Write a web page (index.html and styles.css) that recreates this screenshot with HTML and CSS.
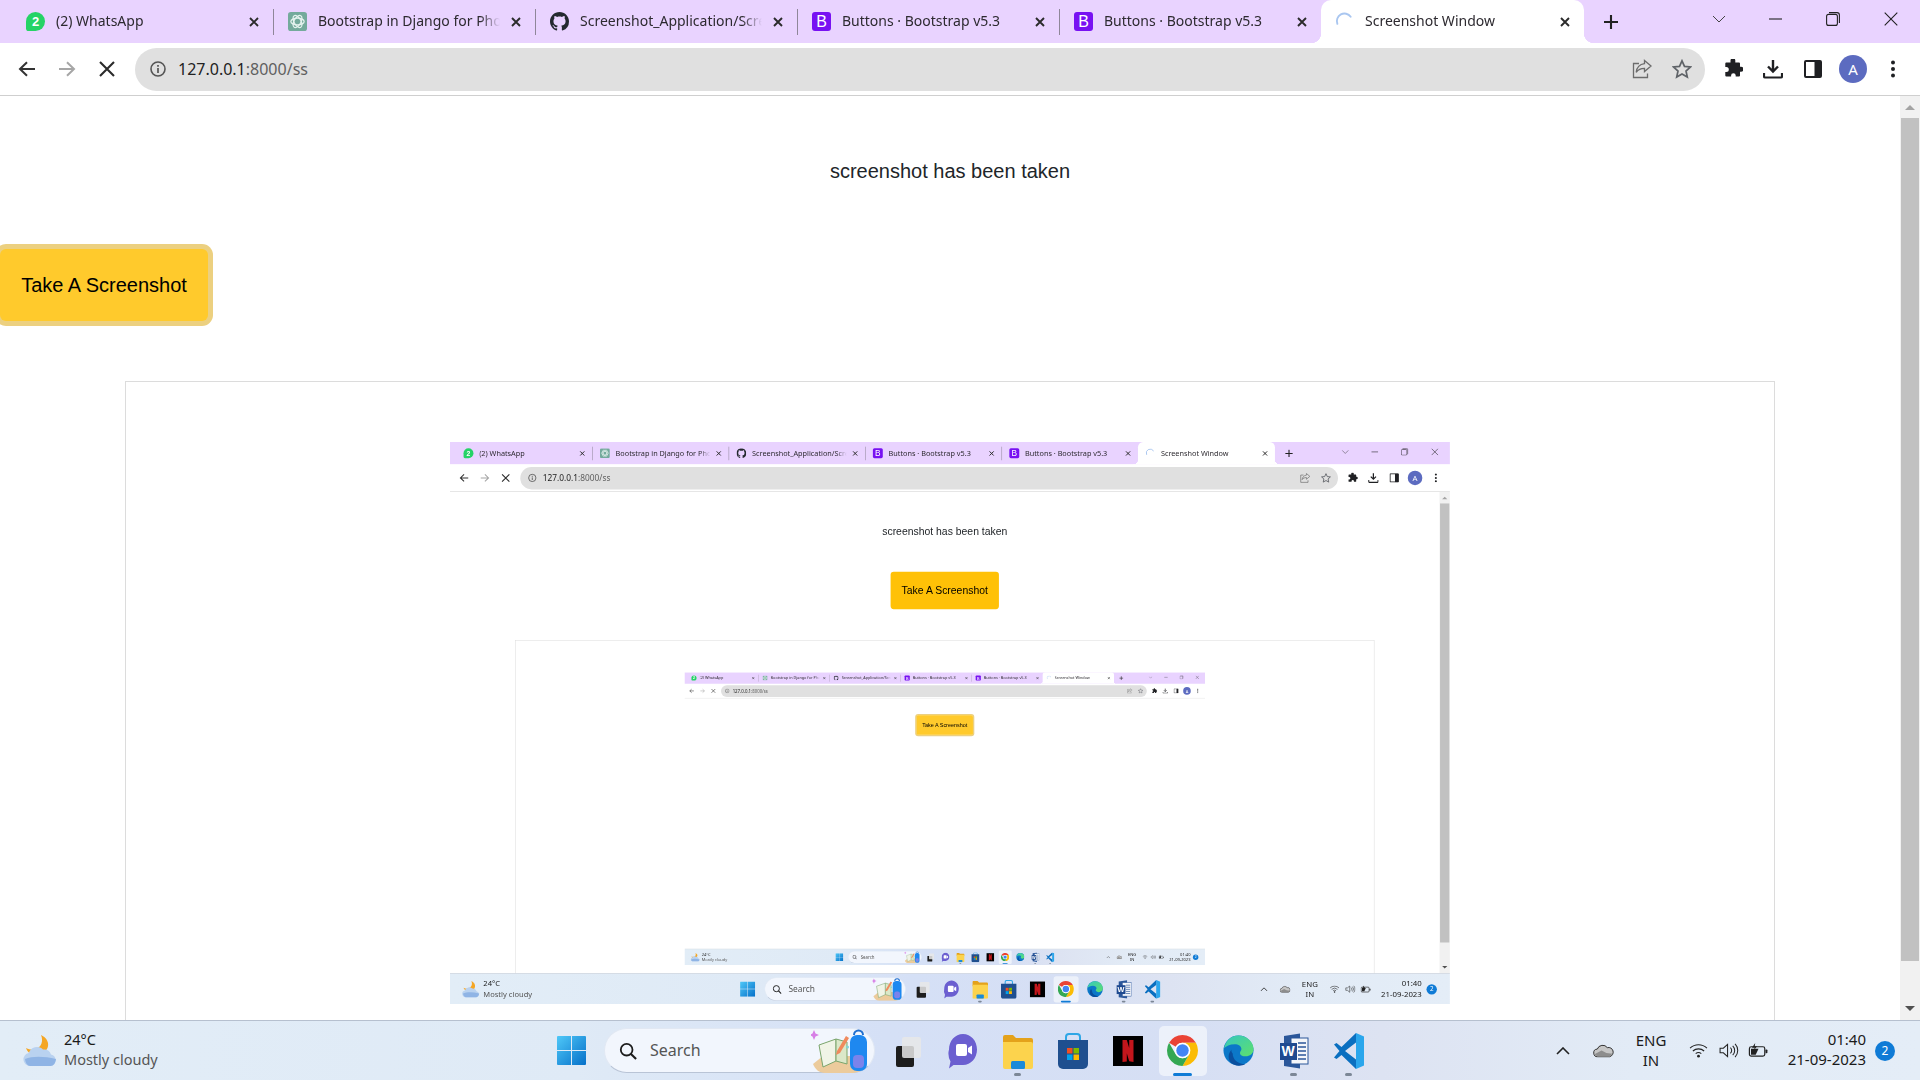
FILE: index.html
```html
<!DOCTYPE html>
<html lang="en">
<head>
<meta charset="utf-8">
<title>Screenshot Window</title>
<link rel="stylesheet" href="styles.css">
</head>
<body>
<svg class="sprite" xmlns="http://www.w3.org/2000/svg">
  <symbol id="i-gpt" viewBox="0 0 20 20"><rect width="20" height="20" rx="3" fill="#74aa9c"/><g fill="none" stroke="#e6f3ef" stroke-width="1.3"><ellipse cx="10" cy="10" rx="7" ry="3.6"/><ellipse cx="10" cy="10" rx="7" ry="3.6" transform="rotate(60 10 10)"/><ellipse cx="10" cy="10" rx="7" ry="3.6" transform="rotate(120 10 10)"/></g></symbol>
  <symbol id="i-gh" viewBox="0 0 16 16"><path fill="#24292f" d="M8 0C3.58 0 0 3.58 0 8c0 3.54 2.29 6.53 5.47 7.59.4.07.55-.17.55-.38 0-.19-.01-.82-.01-1.49-2.01.37-2.53-.49-2.69-.94-.09-.23-.48-.94-.82-1.13-.28-.15-.68-.52-.01-.53.63-.01 1.08.58 1.23.82.72 1.21 1.87.87 2.33.66.07-.52.28-.87.51-1.07-1.78-.2-3.64-.89-3.64-3.95 0-.87.31-1.59.82-2.15-.08-.2-.36-1.02.08-2.12 0 0 .67-.21 2.2.82.64-.18 1.32-.27 2-.27.68 0 1.36.09 2 .27 1.53-1.04 2.2-.82 2.2-.82.44 1.1.16 1.92.08 2.12.51.56.82 1.27.82 2.15 0 3.07-1.87 3.75-3.65 3.95.29.25.54.73.54 1.48 0 1.07-.01 1.93-.01 2.2 0 .21.15.46.55.38A8.013 8.013 0 0 0 16 8c0-4.42-3.58-8-8-8z"/></symbol>
  <symbol id="i-spin" viewBox="0 0 20 20"><path d="M2.5 12.5A8 8 0 0 1 16.5 5" fill="none" stroke="#a9c6f0" stroke-width="2" stroke-linecap="round"/></symbol>
  <symbol id="i-x" viewBox="0 0 12 12"><path d="M2 2l8 8M10 2l-8 8" stroke="#2b2b2b" stroke-width="1.9" fill="none"/></symbol>
  <symbol id="i-plus" viewBox="0 0 16 16"><path d="M8 1v14M1 8h14" stroke="#222" stroke-width="2.1" fill="none"/></symbol>
  <symbol id="i-chev" viewBox="0 0 14 8"><path d="M1 1l6 6 6-6" stroke="#444" stroke-width="1" fill="none"/></symbol>
  <symbol id="i-min" viewBox="0 0 14 14"><path d="M0 7h13" stroke="#222" stroke-width="1.1"/></symbol>
  <symbol id="i-max" viewBox="0 0 14 14"><rect x=".6" y="2.4" width="10.8" height="11" rx="2" fill="none" stroke="#222" stroke-width="1.1"/><path d="M3 .6h8a2.4 2.4 0 0 1 2.4 2.4v8" fill="none" stroke="#222" stroke-width="1.1"/></symbol>
  <symbol id="i-close" viewBox="0 0 14 14"><path d="M.7.7l12.6 12.6M13.300.7L.7 13.300" stroke="#222" stroke-width="1.1" fill="none"/></symbol>
  <symbol id="i-back" viewBox="0 0 20 20"><path d="M18 10H3M10 3.200L3 10l7 6.800" stroke="#333" stroke-width="2" fill="none"/></symbol>
  <symbol id="i-fwd" viewBox="0 0 20 20"><path d="M2 10h15M10 3.200l7 6.800-7 6.800" stroke="#a6a6a6" stroke-width="2" fill="none"/></symbol>
  <symbol id="i-stop" viewBox="0 0 20 20"><path d="M3 3l14 14M17 3L3 17" stroke="#2b2b2b" stroke-width="2.1" fill="none"/></symbol>
  <symbol id="i-info" viewBox="0 0 18 18"><circle cx="9" cy="9" r="7" fill="none" stroke="#555" stroke-width="1.6"/><path d="M9 8v5M9 5v1.800" stroke="#555" stroke-width="1.7"/></symbol>
  <symbol id="i-share" viewBox="0 0 20 20"><path d="M12.500 1.500l6.500 5.500-6.500 5.500V9.300c-4 0-6.500 1.300-8.300 4 .5-4.700 3.300-8 8.300-8.700z" fill="none" stroke="#6c6c6c" stroke-width="1.300"/><path d="M7 4.500H1.500v14h14v-4" fill="none" stroke="#6c6c6c" stroke-width="1.300"/></symbol>
  <symbol id="i-star" viewBox="0 0 20 20"><path d="M10 1.800l2.500 5.600 6 .6-4.500 4 1.300 6L10 15l-5.300 3 1.300-6-4.500-4 6-.6z" fill="none" stroke="#5f6368" stroke-width="1.700"/></symbol>
  <symbol id="i-puz" viewBox="0 0 20 20"><path fill="#1f2023" d="M7.500 1.500a2.400 2.400 0 0 1 4.800.2V3.500h3.700a1 1 0 0 1 1 1v3.200h1a2.500 2.500 0 0 1 0 5h-1V16.500a1 1 0 0 1-1 1h-3.300v-1a2.300 2.300 0 0 0-4.600 0v1H3.300a1 1 0 0 1-1-1v-3.500h1a2.500 2.500 0 0 0 0-5h-1V4.500a1 1 0 0 1 1-1h4.200z"/></symbol>
  <symbol id="i-dl" viewBox="0 0 20 20"><path d="M10 1v11M5 7.500l5 5 5-5" stroke="#1f2023" stroke-width="2.400" fill="none"/><path d="M1 14v3.500a1 1 0 0 0 1 1h16a1 1 0 0 0 1-1V14" stroke="#1f2023" stroke-width="2.200" fill="none"/></symbol>
  <symbol id="i-panel" viewBox="0 0 18 18"><rect x="1" y="1" width="16" height="16" rx="1" fill="#fff" stroke="#1f2023" stroke-width="2"/><rect x="10.500" y="1" width="6.500" height="16" fill="#1f2023"/></symbol>
  <symbol id="i-dots" viewBox="0 0 6 18"><circle cx="3" cy="2.500" r="2" fill="#1f2023"/><circle cx="3" cy="9" r="2" fill="#1f2023"/><circle cx="3" cy="15.500" r="2" fill="#1f2023"/></symbol>
  <symbol id="i-weather" viewBox="0 0 36 36"><path d="M19 2c2.500 6 .5 12-5 14-3 1-6.500.8-10-1 1.500 5 7 8 12 7 7-1.500 11-6.500 10-12-.6-3.500-3.500-6.500-7-8z" fill="#f5a623"/><path d="M8 33a6.500 6.500 0 0 1-1.200-12.900A8.500 8.500 0 0 1 21 16.500a7.500 7.500 0 0 1 8 5A5.900 5.900 0 0 1 29 33z" fill="#b9d2f0"/><path d="M3 26c7-3 19-3 31 0-.5 4-2.500 7-5.500 7H8c-2.500 0-4.500-3-5-7z" fill="#8fb4e5"/></symbol>
  <symbol id="i-win" viewBox="0 0 29 29"><defs><linearGradient id="wg" x1="0" y1="0" x2="1" y2="1"><stop offset="0" stop-color="#4fc8f8"/><stop offset="1" stop-color="#0570c9"/></linearGradient></defs><path d="M0 1a1 1 0 0 1 1-1h13v14H0zM15 0h13a1 1 0 0 1 1 1v13H15zM0 15h14v14H1a1 1 0 0 1-1-1zM15 15h14v13a1 1 0 0 1-1 1H15z" fill="url(#wg)"/></symbol>
  <symbol id="i-search" viewBox="0 0 20 20"><circle cx="8.500" cy="8.500" r="6.500" fill="none" stroke="#1c1c1c" stroke-width="2"/><path d="M13 13l6 6" stroke="#1c1c1c" stroke-width="2.300"/></symbol>
  <symbol id="i-deco" viewBox="0 0 58 44"><path d="M2 35l10-8h36l8 9c-4 6-10 8-16 8H14C8 44 4 40 2 35z" fill="#eccb9c"/><path d="M8 16l17-6v22L12 38z" fill="#f0f4e6" stroke="#7aa56c"/><path d="M25 10l11 3v22l-11-3z" fill="#dbe8c8" stroke="#7aa56c"/><path d="M26 22L35 7l3 2-9 15-4 2z" fill="#f08a5d"/><path d="M3 1l1.500 3.500L8 6 4.500 7.500 3 11 1.500 7.500-2 6l3.500-1.500z" fill="#d77fe6"/><rect x="39" y="6" width="17" height="36" rx="7" fill="#1e88f0"/><path d="M43 6a4.500 4.500 0 0 1 9 0" fill="none" stroke="#1f6fd0" stroke-width="2"/><rect x="42" y="26" width="11" height="13" rx="4" fill="#7b83eb"/><circle cx="36.500" cy="18" r="1.500" fill="#7fd3d8"/></symbol>
  <symbol id="i-tv" viewBox="0 0 30 36"><rect x="3" y="13" width="18" height="21" rx="2" fill="#1d1d1d"/><rect x="9" y="4" width="19" height="21" rx="2" fill="#e8e8e8" fill-opacity=".85"/></symbol>
  <symbol id="i-meet" viewBox="0 0 30 36"><path d="M15 1c8 0 14 7 14 15.500S23 32 15 32H5.500L1 35.500l1.500-7A16 16 0 0 1 1 16.500C1 8 7 1 15 1z" fill="#6b5fd0"/><rect x="8" y="11" width="11" height="12" rx="2" fill="#fff"/><path d="M20 15l4-2.500v9L20 19z" fill="#fff"/></symbol>
  <symbol id="i-folder" viewBox="0 0 30 36"><path d="M0 4a2 2 0 0 1 2-2h8l3 3h15a2 2 0 0 1 2 2v5H0z" fill="#e4a21b"/><path d="M0 9h28a2 2 0 0 1 2 2v23a2 2 0 0 1-2 2H2a2 2 0 0 1-2-2z" fill="#fcd34d"/><rect x="8" y="28" width="14" height="8" rx="1.500" fill="#1a8ad8"/></symbol>
  <symbol id="i-store" viewBox="0 0 30 36"><path d="M8 8V4a3 3 0 0 1 3-3h8a3 3 0 0 1 3 3v4" fill="none" stroke="#2ea6e6" stroke-width="2"/><path d="M0 7h30v24a5 5 0 0 1-5 5H5a5 5 0 0 1-5-5z" fill="#1f4f8f"/><rect x="9" y="15" width="5.500" height="5.500" fill="#f25022"/><rect x="15.500" y="15" width="5.500" height="5.500" fill="#7fba00"/><rect x="9" y="21.500" width="5.500" height="5.500" fill="#00a4ef"/><rect x="15.500" y="21.500" width="5.500" height="5.500" fill="#ffb900"/></symbol>
  <symbol id="i-nf" viewBox="0 0 30 30"><rect width="30" height="30" fill="#000"/><path d="M9.500 4h4.300l2.400 8V4h4.300v22l-4.300-.7-2.400-8v8.200l-4.300.5z" fill="#c4161c"/></symbol>
  <symbol id="i-chrome" viewBox="0 0 40 40"><path d="M2.680 10a20 20 0 0 1 34.640 0H20a10 10 0 0 0-8.660 5z" fill="#ea4335"/><path d="M37.320 10H20a10 10 0 0 1 8.660 15L20 40a20 20 0 0 0 17.320-30z" fill="#fbbc04"/><path d="M2.680 10l8.660 15a10 10 0 0 0 17.320 0L20 40A20 20 0 0 1 2.680 10z" fill="#34a853"/><circle cx="20" cy="20" r="10" fill="#fff"/><circle cx="20" cy="20" r="8" fill="#4285f4"/></symbol>
  <symbol id="i-edge" viewBox="0 0 32 32"><defs><linearGradient id="eg" x1="0" y1="0" x2="1" y2="1"><stop offset="0" stop-color="#36c7c0"/><stop offset="1" stop-color="#5ee06c"/></linearGradient></defs><circle cx="16" cy="16" r="15.500" fill="#0c78c8"/><path d="M1 14C3 5 9 .5 16 .5c9 0 15.500 7 15.500 14 0 5-4 7.500-8 7.500-3 0-6-1-6-3.500 0-1.500 1.500-2 1.500-4 0-3-3-5-7-5-5 0-9 2-11.500 4.500z" fill="url(#eg)"/><path d="M10 19c0 6 5 11 13 11-3 2-8 2.500-12 .5C5 28 4 20 9 15c-.5 1-.5 2.500 1 4z" fill="#0a4f9e"/></symbol>
  <symbol id="i-word" viewBox="0 0 30 36"><path d="M5 3l16-2.500V35.500L5 33z" fill="#2b579a"/><rect x="12" y="5" width="17" height="26" fill="#f4f6fa" stroke="#2b579a"/><path d="M19 10h8M19 14h8M19 18h8M19 22h8M19 26h8" stroke="#2b579a" stroke-width="1.300"/><rect x="1" y="10" width="17" height="17" fill="#1f4a90"/></symbol>
  <symbol id="i-vs" viewBox="0 0 30 36"><path d="M22 0l8 3.500v29L22 36z" fill="#2aa6ec"/><path d="M22 0L7.500 14 2.500 10 0 11.500 5.500 18 0 24.500 2.500 26l5-4L22 36V26.500L11 18 22 9.500z" fill="#0a6fc0"/></symbol>
  <symbol id="i-up" viewBox="0 0 14 8"><path d="M1 7l6-6 6 6" stroke="#222" stroke-width="1.600" fill="none"/></symbol>
  <symbol id="i-cloud" viewBox="0 0 22 14"><path d="M5 13.500a4 4 0 0 1-.5-8A6 6 0 0 1 15 4a4.800 4.800 0 0 1 2.500 9.500z" fill="#c6c6c6" stroke="#2b2b2b" stroke-width="1"/><path d="M1.500 11L9 7l5 2.500 6.500 1-3 3H5z" fill="#8d8d8d"/></symbol>
  <symbol id="i-wifi" viewBox="0 0 20 16"><path d="M1 5.500a13 13 0 0 1 18 0M4 8.500a9 9 0 0 1 12 0M7 11.300a5 5 0 0 1 6 0" fill="none" stroke="#222" stroke-width="1.200"/><circle cx="10" cy="14" r="1.500" fill="#222"/></symbol>
  <symbol id="i-vol" viewBox="0 0 20 16"><path d="M1 5.500h3.500L9 1.500v13L4.500 10.500H1z" fill="none" stroke="#222" stroke-width="1.100"/><path d="M12 5a4 4 0 0 1 0 6M14.500 3a7 7 0 0 1 0 10M17 1a10 10 0 0 1 0 14" fill="none" stroke="#222" stroke-width="1.100"/></symbol>
  <symbol id="i-bat" viewBox="0 0 21 16"><rect x=".8" y="4" width="16.400" height="10" rx="2" fill="none" stroke="#222" stroke-width="1.300"/><rect x="18" y="7" width="2" height="4" rx=".8" fill="#222"/><path d="M2.500 6h8l-3 6.500h-5z" fill="#222"/><path d="M7 0L3.500 5h3l-1.500 3.500L9 3.500H6.500z" fill="#222"/></symbol>
</svg>

<div class="screen">
  <div class="tabstrip">
    <div class="tab"><span class="fav fav-wa">2</span><span class="tab-title">(2) WhatsApp</span><svg class="tab-x"><use href="#i-x"/></svg></div><i class="tab-sep"></i>
    <div class="tab"><svg class="fav"><use href="#i-gpt"/></svg><span class="tab-title">Bootstrap in Django for Photo</span><svg class="tab-x"><use href="#i-x"/></svg></div><i class="tab-sep"></i>
    <div class="tab"><svg class="fav"><use href="#i-gh"/></svg><span class="tab-title">Screenshot_Application/Screenshot</span><svg class="tab-x"><use href="#i-x"/></svg></div><i class="tab-sep"></i>
    <div class="tab"><span class="fav fav-bs">B</span><span class="tab-title">Buttons · Bootstrap v5.3</span><svg class="tab-x"><use href="#i-x"/></svg></div><i class="tab-sep"></i>
    <div class="tab"><span class="fav fav-bs">B</span><span class="tab-title">Buttons · Bootstrap v5.3</span><svg class="tab-x"><use href="#i-x"/></svg></div>
    <div class="tab tab-active"><svg class="fav"><use href="#i-spin"/></svg><span class="tab-title">Screenshot Window</span><svg class="tab-x"><use href="#i-x"/></svg></div>
    <div class="tab-new"><svg class="ic-16"><use href="#i-plus"/></svg></div>
    <div class="win-btns">
      <div class="win-btn"><svg class="ic-chev"><use href="#i-chev"/></svg></div>
      <div class="win-btn"><svg class="ic-14 ic-min"><use href="#i-min"/></svg></div>
      <div class="win-btn"><svg class="ic-14"><use href="#i-max"/></svg></div>
      <div class="win-btn"><svg class="ic-14"><use href="#i-close"/></svg></div>
    </div>
  </div>
  <div class="toolbar">
    <div class="tool-btn"><svg class="ic-20"><use href="#i-back"/></svg></div>
    <div class="tool-btn"><svg class="ic-20"><use href="#i-fwd"/></svg></div>
    <div class="tool-btn"><svg class="ic-20"><use href="#i-stop"/></svg></div>
    <div class="omnibox">
      <svg class="ic-18 omni-info"><use href="#i-info"/></svg>
      <span class="url"><span class="url-host">127.0.0.1</span>:8000/ss</span>
      <div class="tool-btn omni-act"><svg class="ic-20"><use href="#i-share"/></svg></div>
      <div class="tool-btn"><svg class="ic-20"><use href="#i-star"/></svg></div>
    </div>
    <div class="tool-btn"><svg class="ic-20"><use href="#i-puz"/></svg></div>
    <div class="tool-btn"><svg class="ic-20"><use href="#i-dl"/></svg></div>
    <div class="tool-btn"><svg class="ic-18"><use href="#i-panel"/></svg></div>
    <div class="tool-btn"><span class="avatar">A</span></div>
    <div class="tool-btn"><svg class="ic-dots"><use href="#i-dots"/></svg></div>
  </div>
  <div class="viewport">
    <main class="page">
      <p class="status">screenshot has been taken</p>
      <button class="shot-btn shot-btn-focus shot-btn-left">Take A Screenshot</button>
      <div class="frame">
        <div class="shot">

          <div class="screen screen-scaled">
            <div class="tabstrip">
              <div class="tab"><span class="fav fav-wa">2</span><span class="tab-title">(2) WhatsApp</span><svg class="tab-x"><use href="#i-x"/></svg></div><i class="tab-sep"></i>
              <div class="tab"><svg class="fav"><use href="#i-gpt"/></svg><span class="tab-title">Bootstrap in Django for Photo</span><svg class="tab-x"><use href="#i-x"/></svg></div><i class="tab-sep"></i>
              <div class="tab"><svg class="fav"><use href="#i-gh"/></svg><span class="tab-title">Screenshot_Application/Screenshot</span><svg class="tab-x"><use href="#i-x"/></svg></div><i class="tab-sep"></i>
              <div class="tab"><span class="fav fav-bs">B</span><span class="tab-title">Buttons · Bootstrap v5.3</span><svg class="tab-x"><use href="#i-x"/></svg></div><i class="tab-sep"></i>
              <div class="tab"><span class="fav fav-bs">B</span><span class="tab-title">Buttons · Bootstrap v5.3</span><svg class="tab-x"><use href="#i-x"/></svg></div>
              <div class="tab tab-active"><svg class="fav"><use href="#i-spin"/></svg><span class="tab-title">Screenshot Window</span><svg class="tab-x"><use href="#i-x"/></svg></div>
              <div class="tab-new"><svg class="ic-16"><use href="#i-plus"/></svg></div>
              <div class="win-btns">
                <div class="win-btn"><svg class="ic-chev"><use href="#i-chev"/></svg></div>
                <div class="win-btn"><svg class="ic-14 ic-min"><use href="#i-min"/></svg></div>
                <div class="win-btn"><svg class="ic-14"><use href="#i-max"/></svg></div>
                <div class="win-btn"><svg class="ic-14"><use href="#i-close"/></svg></div>
              </div>
            </div>
            <div class="toolbar">
              <div class="tool-btn"><svg class="ic-20"><use href="#i-back"/></svg></div>
              <div class="tool-btn"><svg class="ic-20"><use href="#i-fwd"/></svg></div>
              <div class="tool-btn"><svg class="ic-20"><use href="#i-stop"/></svg></div>
              <div class="omnibox">
                <svg class="ic-18 omni-info"><use href="#i-info"/></svg>
                <span class="url"><span class="url-host">127.0.0.1</span>:8000/ss</span>
                <div class="tool-btn omni-act"><svg class="ic-20"><use href="#i-share"/></svg></div>
                <div class="tool-btn"><svg class="ic-20"><use href="#i-star"/></svg></div>
              </div>
              <div class="tool-btn"><svg class="ic-20"><use href="#i-puz"/></svg></div>
              <div class="tool-btn"><svg class="ic-20"><use href="#i-dl"/></svg></div>
              <div class="tool-btn"><svg class="ic-18"><use href="#i-panel"/></svg></div>
              <div class="tool-btn"><span class="avatar">A</span></div>
              <div class="tool-btn"><svg class="ic-dots"><use href="#i-dots"/></svg></div>
            </div>
            <div class="viewport">
              <main class="page">
                <p class="status">screenshot has been taken</p>
                <button class="shot-btn">Take A Screenshot</button>
                <div class="frame">
                  <div class="shot">

                    <div class="screen screen-scaled">
                      <div class="tabstrip">
                        <div class="tab"><span class="fav fav-wa">2</span><span class="tab-title">(2) WhatsApp</span><svg class="tab-x"><use href="#i-x"/></svg></div><i class="tab-sep"></i>
                        <div class="tab"><svg class="fav"><use href="#i-gpt"/></svg><span class="tab-title">Bootstrap in Django for Photo</span><svg class="tab-x"><use href="#i-x"/></svg></div><i class="tab-sep"></i>
                        <div class="tab"><svg class="fav"><use href="#i-gh"/></svg><span class="tab-title">Screenshot_Application/Screenshot</span><svg class="tab-x"><use href="#i-x"/></svg></div><i class="tab-sep"></i>
                        <div class="tab"><span class="fav fav-bs">B</span><span class="tab-title">Buttons · Bootstrap v5.3</span><svg class="tab-x"><use href="#i-x"/></svg></div><i class="tab-sep"></i>
                        <div class="tab"><span class="fav fav-bs">B</span><span class="tab-title">Buttons · Bootstrap v5.3</span><svg class="tab-x"><use href="#i-x"/></svg></div>
                        <div class="tab tab-active"><svg class="fav"><use href="#i-spin"/></svg><span class="tab-title">Screenshot Window</span><svg class="tab-x"><use href="#i-x"/></svg></div>
                        <div class="tab-new"><svg class="ic-16"><use href="#i-plus"/></svg></div>
                        <div class="win-btns">
                          <div class="win-btn"><svg class="ic-chev"><use href="#i-chev"/></svg></div>
                          <div class="win-btn"><svg class="ic-14 ic-min"><use href="#i-min"/></svg></div>
                          <div class="win-btn"><svg class="ic-14"><use href="#i-max"/></svg></div>
                          <div class="win-btn"><svg class="ic-14"><use href="#i-close"/></svg></div>
                        </div>
                      </div>
                      <div class="toolbar">
                        <div class="tool-btn"><svg class="ic-20"><use href="#i-back"/></svg></div>
                        <div class="tool-btn"><svg class="ic-20"><use href="#i-fwd"/></svg></div>
                        <div class="tool-btn"><svg class="ic-20"><use href="#i-stop"/></svg></div>
                        <div class="omnibox">
                          <svg class="ic-18 omni-info"><use href="#i-info"/></svg>
                          <span class="url"><span class="url-host">127.0.0.1</span>:8000/ss</span>
                          <div class="tool-btn omni-act"><svg class="ic-20"><use href="#i-share"/></svg></div>
                          <div class="tool-btn"><svg class="ic-20"><use href="#i-star"/></svg></div>
                        </div>
                        <div class="tool-btn"><svg class="ic-20"><use href="#i-puz"/></svg></div>
                        <div class="tool-btn"><svg class="ic-20"><use href="#i-dl"/></svg></div>
                        <div class="tool-btn"><svg class="ic-18"><use href="#i-panel"/></svg></div>
                        <div class="tool-btn"><span class="avatar">A</span></div>
                        <div class="tool-btn"><svg class="ic-dots"><use href="#i-dots"/></svg></div>
                      </div>
                      <div class="viewport">
                        <main class="page page-bare">
                          <button class="shot-btn shot-btn-focus">Take A Screenshot</button>
                        </main>
                      </div>
                      <div class="taskbar">
                        <div class="tb-weather"><svg class="ic-weather"><use href="#i-weather"/></svg><div class="tb-wtext"><span class="tb-temp">24°C</span><span class="tb-cond">Mostly cloudy</span></div></div>
                        <div class="tb-center">
                          <svg class="ic-win"><use href="#i-win"/></svg>
                          <div class="tb-search"><svg class="ic-search"><use href="#i-search"/></svg><span class="tb-search-label">Search</span><svg class="ic-deco"><use href="#i-deco"/></svg></div>
                          <div class="tb-app"><svg class="ic-app"><use href="#i-tv"/></svg></div>
                          <div class="tb-app"><svg class="ic-app"><use href="#i-meet"/></svg></div>
                          <div class="tb-app tb-open"><svg class="ic-app"><use href="#i-folder"/></svg></div>
                          <div class="tb-app"><svg class="ic-app"><use href="#i-store"/></svg></div>
                          <div class="tb-app"><svg class="ic-app"><use href="#i-nf"/></svg></div>
                          <div class="tb-app tb-active"><svg class="ic-round"><use href="#i-chrome"/></svg></div>
                          <div class="tb-app"><svg class="ic-round"><use href="#i-edge"/></svg></div>
                          <div class="tb-app tb-open"><svg class="ic-app"><use href="#i-word"/></svg><span class="word-w">W</span></div>
                          <div class="tb-app tb-open"><svg class="ic-app"><use href="#i-vs"/></svg></div>
                        </div>
                        <div class="tb-tray">
                          <div class="tray-item"><svg class="ic-up"><use href="#i-up"/></svg></div>
                          <div class="tray-item"><svg class="ic-tray"><use href="#i-cloud"/></svg></div>
                          <div class="tray-lang"><span>ENG</span><span>IN</span></div>
                          <div class="tray-item tray-sm tray-gap"><svg class="ic-tray"><use href="#i-wifi"/></svg></div>
                          <div class="tray-item tray-sm"><svg class="ic-tray"><use href="#i-vol"/></svg></div>
                          <div class="tray-item tray-sm"><svg class="ic-tray"><use href="#i-bat"/></svg></div>
                          <div class="tray-clock"><span>01:40</span><span>21-09-2023</span></div>
                          <span class="tray-badge">2</span>
                        </div>
                      </div>
                    </div>

                  </div>
                </div>
              </main>
              <div class="scrollbar"><span class="sb-up"></span><span class="sb-thumb"></span><span class="sb-down"></span></div>
            </div>
            <div class="taskbar">
              <div class="tb-weather"><svg class="ic-weather"><use href="#i-weather"/></svg><div class="tb-wtext"><span class="tb-temp">24°C</span><span class="tb-cond">Mostly cloudy</span></div></div>
              <div class="tb-center">
                <svg class="ic-win"><use href="#i-win"/></svg>
                <div class="tb-search"><svg class="ic-search"><use href="#i-search"/></svg><span class="tb-search-label">Search</span><svg class="ic-deco"><use href="#i-deco"/></svg></div>
                <div class="tb-app"><svg class="ic-app"><use href="#i-tv"/></svg></div>
                <div class="tb-app"><svg class="ic-app"><use href="#i-meet"/></svg></div>
                <div class="tb-app tb-open"><svg class="ic-app"><use href="#i-folder"/></svg></div>
                <div class="tb-app"><svg class="ic-app"><use href="#i-store"/></svg></div>
                <div class="tb-app"><svg class="ic-app"><use href="#i-nf"/></svg></div>
                <div class="tb-app tb-active"><svg class="ic-round"><use href="#i-chrome"/></svg></div>
                <div class="tb-app"><svg class="ic-round"><use href="#i-edge"/></svg></div>
                <div class="tb-app tb-open"><svg class="ic-app"><use href="#i-word"/></svg><span class="word-w">W</span></div>
                <div class="tb-app tb-open"><svg class="ic-app"><use href="#i-vs"/></svg></div>
              </div>
              <div class="tb-tray">
                <div class="tray-item"><svg class="ic-up"><use href="#i-up"/></svg></div>
                <div class="tray-item"><svg class="ic-tray"><use href="#i-cloud"/></svg></div>
                <div class="tray-lang"><span>ENG</span><span>IN</span></div>
                <div class="tray-item tray-sm tray-gap"><svg class="ic-tray"><use href="#i-wifi"/></svg></div>
                <div class="tray-item tray-sm"><svg class="ic-tray"><use href="#i-vol"/></svg></div>
                <div class="tray-item tray-sm"><svg class="ic-tray"><use href="#i-bat"/></svg></div>
                <div class="tray-clock"><span>01:40</span><span>21-09-2023</span></div>
                <span class="tray-badge">2</span>
              </div>
            </div>
          </div>

        </div>
      </div>
    </main>
    <div class="scrollbar"><span class="sb-up"></span><span class="sb-thumb"></span><span class="sb-down"></span></div>
  </div>
  <div class="taskbar">
    <div class="tb-weather"><svg class="ic-weather"><use href="#i-weather"/></svg><div class="tb-wtext"><span class="tb-temp">24°C</span><span class="tb-cond">Mostly cloudy</span></div></div>
    <div class="tb-center">
      <svg class="ic-win"><use href="#i-win"/></svg>
      <div class="tb-search"><svg class="ic-search"><use href="#i-search"/></svg><span class="tb-search-label">Search</span><svg class="ic-deco"><use href="#i-deco"/></svg></div>
      <div class="tb-app"><svg class="ic-app"><use href="#i-tv"/></svg></div>
      <div class="tb-app"><svg class="ic-app"><use href="#i-meet"/></svg></div>
      <div class="tb-app tb-open"><svg class="ic-app"><use href="#i-folder"/></svg></div>
      <div class="tb-app"><svg class="ic-app"><use href="#i-store"/></svg></div>
      <div class="tb-app"><svg class="ic-app"><use href="#i-nf"/></svg></div>
      <div class="tb-app tb-active"><svg class="ic-round"><use href="#i-chrome"/></svg></div>
      <div class="tb-app"><svg class="ic-round"><use href="#i-edge"/></svg></div>
      <div class="tb-app tb-open"><svg class="ic-app"><use href="#i-word"/></svg><span class="word-w">W</span></div>
      <div class="tb-app tb-open"><svg class="ic-app"><use href="#i-vs"/></svg></div>
    </div>
    <div class="tb-tray">
      <div class="tray-item"><svg class="ic-up"><use href="#i-up"/></svg></div>
      <div class="tray-item"><svg class="ic-tray"><use href="#i-cloud"/></svg></div>
      <div class="tray-lang"><span>ENG</span><span>IN</span></div>
      <div class="tray-item tray-sm tray-gap"><svg class="ic-tray"><use href="#i-wifi"/></svg></div>
      <div class="tray-item tray-sm"><svg class="ic-tray"><use href="#i-vol"/></svg></div>
      <div class="tray-item tray-sm"><svg class="ic-tray"><use href="#i-bat"/></svg></div>
      <div class="tray-clock"><span>01:40</span><span>21-09-2023</span></div>
      <span class="tray-badge">2</span>
    </div>
  </div>
</div>
</body>
</html>
```

FILE: styles.css
```css
* { box-sizing: border-box; }
html, body { margin: 0; height: 100%; overflow: hidden; background: #fff; }
body { font-family: "Noto Sans", "Liberation Sans", sans-serif; color: #222; }
.sprite { width: 0; height: 0; display: block; }
svg { display: block; flex: none; }

.screen { width: 1920px; height: 1080px; display: grid; grid-template-rows: 43px 53px 924px 60px; overflow: hidden; background: #fff; }
.screen-scaled { transform: scale(.5208); transform-origin: 0 0; }

/* tab strip */
.tabstrip { display: flex; align-items: stretch; padding-left: 12px; background: #e9d3ff; }
.tab { width: 261px; display: flex; align-items: center; padding: 0 13px 0 14px; position: relative; }
.tab-sep { width: 1px; height: 26px; align-self: center; background: #8f8699; }
.tab-active { width: 263px; background: #fff; border-radius: 10px 10px 0 0; }
.tab-active::before, .tab-active::after { content: ""; position: absolute; bottom: 0; width: 10px; height: 10px; }
.tab-active::before { left: -10px; background: radial-gradient(circle at 0 0, transparent 10px, #fff 10.5px); }
.tab-active::after { right: -10px; background: radial-gradient(circle at 100% 0, transparent 10px, #fff 10.5px); }
.fav { width: 19px; height: 19px; flex: none; }
.fav-wa, .fav-bs { display: flex; align-items: center; justify-content: center; color: #fff; font-family: "Liberation Sans", sans-serif; }
.fav-wa { background: #25d366; border-radius: 50% 50% 50% 15%; font-size: 13px; font-weight: 700; }
.fav-bs { background: #7811f2; border-radius: 3px; font-size: 16px; }
.tab-title { flex: 1; min-width: 0; margin: 0 10px 2px 11px; font-size: 14px; line-height: 20px; color: #2d2a30; white-space: nowrap; overflow: hidden; -webkit-mask-image: linear-gradient(90deg, #000 calc(100% - 20px), transparent); mask-image: linear-gradient(90deg, #000 calc(100% - 20px), transparent); }
.tab-x { width: 12px; height: 12px; }
.tab-new { width: 54px; display: flex; align-items: center; justify-content: center; }
.win-btns { margin-left: auto; display: flex; align-items: flex-start; }
.win-btn { width: 58px; height: 38px; display: flex; align-items: center; justify-content: center; }
.ic-16 { width: 16px; height: 16px; }
.ic-14 { width: 14px; height: 14px; }
.ic-min { margin-left: 2px; }
.ic-chev { width: 14px; height: 8px; margin-left: 4px; }
.ic-20 { width: 20px; height: 20px; }
.ic-18 { width: 18px; height: 18px; }
.ic-dots { width: 6px; height: 18px; }

/* toolbar */
.toolbar { display: flex; align-items: center; padding: 0 7px; background: #fff; border-bottom: 1px solid #cfcfcf; }
.tool-btn { width: 40px; height: 40px; flex: none; display: flex; align-items: center; justify-content: center; }
.omnibox { flex: 1; height: 43px; margin: 0 8px; padding: 0 3px 0 14px; border-radius: 22px; background: #e0e0e0; display: flex; align-items: center; }
.omni-info { margin-right: 11px; }
.url { font-size: 16px; color: #5f5f5f; white-space: nowrap; }
.url-host { color: #222; }
.omni-act { margin-left: auto; }
.avatar { width: 28px; height: 28px; border-radius: 50%; background: #5c6bc0; color: #fff; font-size: 15px; display: flex; align-items: center; justify-content: center; }

/* page */
.viewport { display: flex; min-height: 0; overflow: hidden; }
.page { flex: 1; min-width: 0; display: flex; flex-direction: column; align-items: center; padding-top: 60px; }
.page-bare { padding-top: 63px; }
.status { margin: 0 0 63px; font-family: "Liberation Sans", Arial, sans-serif; font-size: 20px; line-height: 30px; color: #212529; }
.shot-btn { width: 208px; height: 72px; flex: none; padding: 0; border: 0; border-radius: 6px; background: #ffc107; color: #000; font-family: "Liberation Sans", Arial, sans-serif; font-size: 20px; }
.shot-btn-focus { background: #ffca2c; box-shadow: 0 0 0 5px #ecd080; }
.shot-btn-left { align-self: flex-start; }
.frame { width: 1650px; flex: none; height: 760px; margin-top: 60px; padding-top: 60px; border: 1px solid #dcdcdc; display: flex; justify-content: center; }
.shot { width: 1000px; height: 562px; flex: none; overflow: hidden; }
.scrollbar { width: 20px; flex: none; background: #f1f1f1; display: flex; flex-direction: column; align-items: center; }
.sb-up { margin-top: 9px; width: 0; height: 0; border: 5px solid transparent; border-top: 0; border-bottom: 5px solid #a3a3a3; }
.sb-thumb { margin-top: 8px; width: 18px; height: 843px; background: #c1c1c1; }
.sb-down { margin-top: auto; margin-bottom: 9px; width: 0; height: 0; border: 5px solid transparent; border-bottom: 0; border-top: 5px solid #505050; }

/* taskbar */
.taskbar { display: grid; grid-template-columns: 557px auto 1fr; align-items: center; border-top: 1px solid #b6c0cf; background: linear-gradient(90deg, #e2edf7 0, #dfeaf6 30%, #d5e0f6 46%, #d6dff4 62%, #dde3f2 72%, #e2ebf6 85%, #e4edf7 100%); }
.tb-weather { display: flex; align-items: center; padding-left: 22px; }
.ic-weather { width: 36px; height: 36px; }
.tb-wtext { margin-left: 6px; padding-bottom: 4px; display: flex; flex-direction: column; font-size: 14.500px; line-height: 20px; }
.tb-temp { color: #1a1a1a; }
.tb-cond { color: #555; }
.tb-center { display: flex; align-items: center; }
.ic-win { width: 29px; height: 29px; }
.tb-search { width: 271px; height: 45px; margin: 0 5px 0 18px; padding: 0 5px 0 14px; border-radius: 23px; background: #f2f6fd; border: 1px solid #e1e8f3; border-bottom-color: #b9c4d6; display: flex; align-items: center; }
.ic-search { width: 18px; height: 18px; }
.tb-search-label { margin-left: 13px; padding-bottom: 2px; font-size: 16px; color: #555; }
.ic-deco { width: 58px; height: 44px; margin-left: auto; }
.tb-app { width: 55.200px; height: 50px; display: flex; align-items: center; justify-content: center; position: relative; }
.ic-app { width: 30px; height: 36px; }
.ic-round { width: 31px; height: 31px; }
.word-w { position: absolute; left: 13.600px; top: 17px; width: 17px; height: 17px; display: flex; align-items: center; justify-content: center; font-family: "Liberation Sans", sans-serif; font-weight: 700; font-size: 14px; color: #fff; }
.tb-active { background: rgba(255, 255, 255, .55); border-radius: 5px; margin: 0 4px 0 3px; width: 48px; }
.tb-open::after, .tb-active::after { content: ""; position: absolute; bottom: 0; left: 50%; width: 7px; height: 3px; margin-left: -3.500px; border-radius: 2px; background: #7c8796; }
.tb-active::after { width: 19px; margin-left: -9.500px; background: #0f7bd6; }
.tb-tray { justify-self: end; display: flex; align-items: center; padding-right: 25px; }
.tray-item { width: 40px; display: flex; justify-content: center; }
.tray-sm { width: 30px; }
.tray-gap { margin-left: 4px; }
.ic-up { width: 14px; height: 8px; }
.ic-tray { width: 21px; height: 15px; }
.tray-lang { width: 56px; padding-bottom: 2px; display: flex; flex-direction: column; align-items: center; font-size: 15px; line-height: 20px; color: #1a1a1a; }
.tray-clock { width: 93px; padding-bottom: 4px; display: flex; flex-direction: column; align-items: flex-end; font-size: 15px; line-height: 20px; color: #1a1a1a; }
.tray-badge { width: 20px; height: 20px; margin-left: 9px; border-radius: 50%; background: #0f7bd6; color: #fff; font-size: 12px; display: flex; align-items: center; justify-content: center; }
```
